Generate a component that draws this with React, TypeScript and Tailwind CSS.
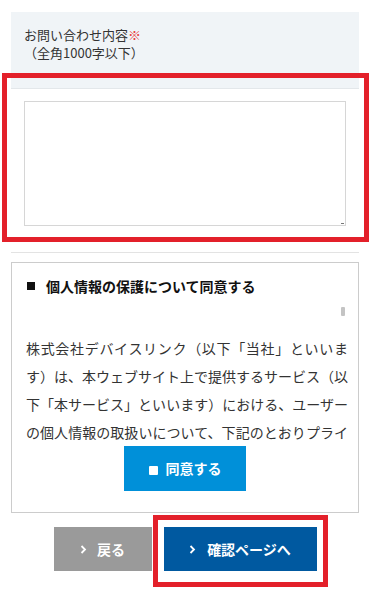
const JP = "font-['Noto_Sans_CJK_JP','Noto_Sans',sans-serif]"

const POLICY =
  '株式会社デバイスリンク（以下「当社」といいます）は、本ウェブサイト上で提供するサービス（以下「本サービス」といいます）における、ユーザーの個人情報の取扱いについて、下記のとおりプライバシーポリシー（以下「本ポリシー」といいます）を定めます。'

function Chevron() {
  return (
    <svg width="7" height="9" viewBox="0 0 7 9" className="shrink-0">
      <path d="M1.5 1 L5 4.5 L1.5 8" fill="none" stroke="#fff" strokeWidth="1.8" />
    </svg>
  )
}

export default function App() {
  return (
    <div className={`relative w-[372px] h-[603px] bg-white text-[#333] ${JP}`}>
      <div className="pt-[12px] pl-[11px]">
        {/* form row */}
        <div className="w-[348px]">
          <div className="h-[77px] bg-[#f0f4f7] border-b border-[#e3e7ea] pl-[13px] pt-[14px] text-[13px] leading-[18px]">
            <p>
              お問い合わせ内容<span className="text-[#e8413d]">※</span>
            </p>
            <p>（全角1000字以下）</p>
          </div>
          <div className="h-[164px] border-b border-[#e3e3e3] pl-[13px] pt-[12px]">
            <div className="relative w-[322px] h-[125px]">
              <textarea className="block w-full h-full resize-none border border-[#d6d6d6] bg-white outline-none" />
              <span className="absolute right-[2px] bottom-[2px] w-[3px] h-[1px] bg-[#777]" />
            </div>
          </div>
        </div>

        {/* privacy */}
        <div className="mt-[9px] w-[348px] h-[251px] border border-[#cccccc] pl-[14px] pt-[13px]">
          <h3 className="flex items-center text-[14px] leading-[20px] font-bold text-[#111]">
            <span className="inline-block w-[8px] h-[8px] bg-[#111] ml-[1px] mr-[11px]" />
            個人情報の保護について同意する
          </h3>
          <div className="relative mt-[10px] h-[140px] w-[322px] overflow-hidden">
            <p className="pt-[28px] text-[14px] leading-[28px] text-justify text-[#333]">{POLICY}</p>
            <span className="absolute left-[315px] top-[1px] w-[4px] h-[9px] rounded-[1px] bg-[#c4c4c4]" />
          </div>
          <div className="flex justify-center pr-[14px]">
            <button className="flex items-center justify-center gap-[8px] w-[122px] h-[45px] bg-[#0090d9] text-white text-[14px] font-bold">
              <input type="checkbox" className="appearance-none w-[9px] h-[9px] bg-white rounded-[1px] mt-[3px]" />
              <span>同意する</span>
            </button>
          </div>
        </div>

        {/* buttons */}
        <div className="mt-[14px] w-[348px] flex justify-center gap-[12px]">
          <button className="flex items-center justify-center gap-[10px] w-[98px] h-[44px] bg-[#9a9a9a] text-white text-[14px] font-bold">
            <Chevron />
            戻る
          </button>
          <button className="flex items-center justify-center gap-[11px] w-[153px] h-[44px] bg-[#0059a0] text-white text-[14px] font-bold">
            <Chevron />
            確認ページへ
          </button>
        </div>
      </div>

      {/* annotation frames */}
      <div className="absolute left-[2px] top-[73px] w-[367px] h-[169px] border-[5px] border-[#e3202a] pointer-events-none" />
      <div className="absolute left-[153px] top-[515px] w-[175px] h-[72px] border-[5px] border-[#e3202a] pointer-events-none" />
    </div>
  )
}
